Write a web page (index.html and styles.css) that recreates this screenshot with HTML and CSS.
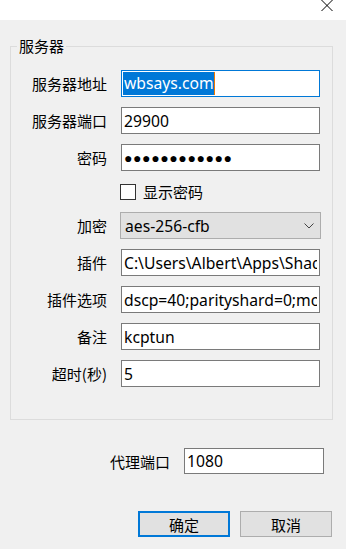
FILE: index.html
```html
<!DOCTYPE html>
<html lang="zh-CN">
<head>
    <meta charset="UTF-8">
    <meta name="viewport" content="width=device-width, initial-scale=1.0">
    <title>编辑服务器</title>
    <link rel="stylesheet" href="styles.css">
</head>
<body>

    <!-- Title bar -->
    <div class="titlebar">
        <svg class="close" width="12" height="11" viewBox="0 0 12 11">
            <path d="M0.5 0 L11.5 11 M11.5 0 L0.5 11" stroke="#000" stroke-width="1" fill="none"/>
        </svg>
    </div>

    <!-- Server group -->
    <fieldset class="group">
        <legend>服务器</legend>
        <div class="form">
            <label>服务器地址</label>
            <div class="field focused"><span class="sel">wbsays.com</span><span class="caret"></span></div>

            <label>服务器端口</label>
            <input class="field" type="text" value="29900">

            <label>密码</label>
            <input class="field pass" type="text" value="●●●●●●●●●●●●">

            <span></span>
            <div class="check-row">
                <span class="checkbox"></span>
                <span>显示密码</span>
            </div>

            <label>加密</label>
            <div class="select">
                <span>aes-256-cfb</span>
                <svg width="10" height="6" viewBox="0 0 10 6">
                    <path d="M0.5 0.5 L5 5 L9.5 0.5" stroke="#444" stroke-width="1" fill="none"/>
                </svg>
            </div>

            <label>插件</label>
            <input class="field" type="text" value="C:\Users\Albert\Apps\Shadowsocks\kcptun.exe">

            <label>插件选项</label>
            <input class="field" type="text" value="dscp=40;parityshard=0;mode=fast2">

            <label>备注</label>
            <input class="field" type="text" value="kcptun">

            <label>超时(秒)</label>
            <input class="field" type="text" value="5">
        </div>
    </fieldset>

    <!-- Proxy port -->
    <div class="proxy-row">
        <label>代理端口</label>
        <input class="field proxy" type="text" value="1080">
    </div>

    <!-- Buttons -->
    <div class="button-row">
        <button class="btn primary">确定</button>
        <button class="btn">取消</button>
    </div>

</body>
</html>
```

FILE: styles.css
```css
body {
    margin: 0;
    padding: 0;
    width: 346px;
    height: 549px;
    overflow: hidden;
    background-color: #f0f0f0;
    color: #000;
    font-family: "Noto Sans", "Noto Sans CJK SC", sans-serif;
    font-size: 15px;
}
.titlebar {
    height: 20px;
    background: #ffffff;
    display: flex;
    justify-content: flex-end;
    align-items: flex-start;
    padding-right: 13px;
}
.group {
    margin: 16px 13px 0 10px;
    border: 1px solid #dcdcdc;
    padding: 14px 12px 32px 5px;
}
.group legend {
    margin-left: 1px;
    padding: 0 2px;
    line-height: 20px;
    font-family: "Noto Sans CJK SC", sans-serif;
}
.form {
    display: grid;
    grid-template-columns: 91px 199px;
    column-gap: 14px;
    row-gap: 10px;
    align-items: center;
}
.form label {
    text-align: right;
    font-family: "Noto Sans CJK SC", sans-serif;
}
.field {
    box-sizing: border-box;
    height: 27px;
    margin: 0;
    padding: 0 2px;
    border: 1px solid #7a7a7a;
    background: #ffffff;
    font-family: "Noto Sans", "Noto Sans CJK SC", sans-serif;
    font-size: 15.7px;
    color: #000;
    outline: none;
    width: 100%;
}
.field.focused {
    border-color: #0078d7;
    display: flex;
    align-items: center;
    padding-left: 1px;
}
.sel {
    background: #0078d7;
    color: #ffffff;
    line-height: 23px;
    padding-left: 1px;
}
.caret {
    width: 1px;
    height: 23px;
    background: #f07800;
}
.pass {
    font-family: "Liberation Sans", sans-serif;
    font-size: 14px;
    letter-spacing: 0.6px;
}
.check-row {
    display: flex;
    align-items: center;
    gap: 7px;
    height: 21px;
    margin-left: -1px;
    font-family: "Noto Sans CJK SC", sans-serif;
}
.checkbox {
    box-sizing: border-box;
    width: 16px;
    height: 16px;
    border: 1px solid #333333;
    background: #ffffff;
}
.select {
    box-sizing: border-box;
    height: 27px;
    margin: 0 -1px;
    padding: 0 6px 0 4px;
    border: 1px solid #adadad;
    background: #e1e1e1;
    display: flex;
    align-items: center;
    justify-content: space-between;
    font-size: 15.7px;
}
.proxy-row {
    display: flex;
    align-items: center;
    justify-content: flex-end;
    gap: 14px;
    margin: 28px 22px 0 0;
}
.proxy-row label {
    font-family: "Noto Sans CJK SC", sans-serif;
}
.field.proxy {
    width: 140px;
    height: 26px;
}
.button-row {
    display: flex;
    justify-content: flex-end;
    gap: 10px;
    margin: 37px 14px 0 0;
}
.btn {
    box-sizing: border-box;
    width: 92px;
    height: 26px;
    padding: 0;
    border: 1px solid #adadad;
    background: #e1e1e1;
    font-family: "Noto Sans CJK SC", sans-serif;
    font-size: 15px;
    color: #000;
}
.btn.primary {
    border: 2px solid #0078d7;
}
```
